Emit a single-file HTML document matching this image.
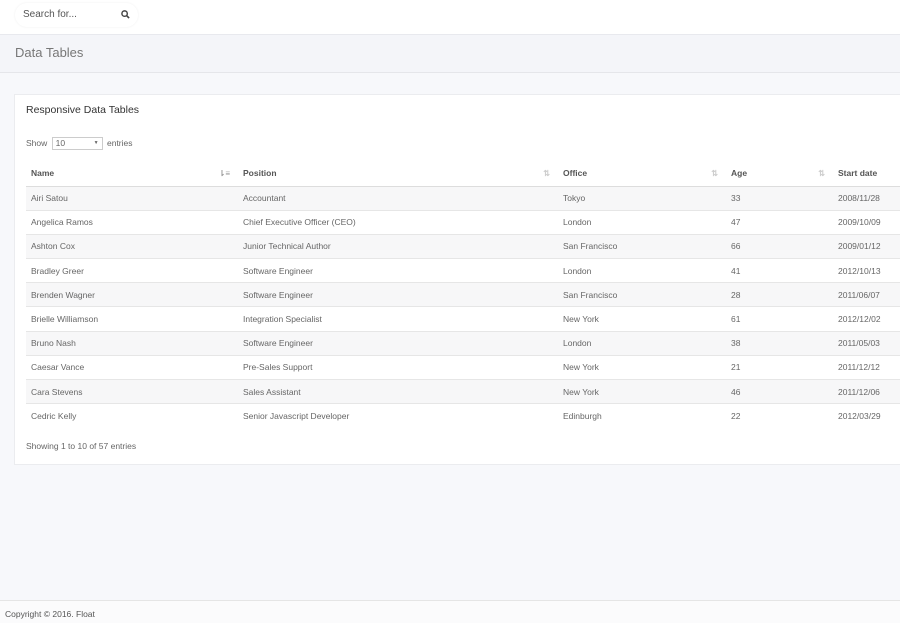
<!DOCTYPE html><html><head><style>
*{box-sizing:border-box;margin:0;padding:0}
body{width:900px;height:623px;overflow:hidden;background:#f7f8fb;font-family:"Liberation Sans",sans-serif;color:#555;position:relative}
.top{position:absolute;left:0;top:0;width:900px;height:35px;background:#fff;border-bottom:1px solid #e8e9ee}
.search{position:absolute;left:15px;top:3px;width:123px;height:24px;border-radius:12px;background:#fff;box-shadow:0 0 2px #eee;font-size:10px;color:#555;padding:6px 0 0 8px}
.hdr{position:absolute;left:0;top:35px;width:900px;height:38px;background:#f4f5f9;border-bottom:1px solid #e5e6ea;font-size:13px;color:#777;padding:10px 0 0 15px}
.card{position:absolute;left:14px;top:94px;width:900px;height:371px;background:#fff;border:1px solid #ebecef}
.card h3{position:absolute;left:11px;top:9px;font-size:10.5px;font-weight:normal;color:#333}
.show{position:absolute;left:11px;top:42px;font-size:8.5px;color:#666}
.sel{display:inline-block;width:51px;height:13px;border:1px solid #ccc;vertical-align:middle;margin:0 2px;padding-left:3px;line-height:11px;position:relative}
.sel:after{content:"▼";position:absolute;right:3px;font-size:5px}
table{position:absolute;left:11px;top:66px;width:880px;border-collapse:collapse;font-size:8.5px;color:#666}
th{height:25px;text-align:left;font-weight:bold;color:#555;padding-left:5px;border-bottom:1px solid #ddd;position:relative}
th i{position:absolute;right:8px;top:8px;font-style:normal;color:#ccc;font-size:8px}
td{height:24.2px;padding-left:5px;border-bottom:1px solid #e6e6e6}
tr.o td{background:#f7f7f8}
.info{position:absolute;left:11px;top:346px;font-size:8.5px;color:#666}
.foot{position:absolute;left:0;top:600px;width:900px;height:23px;border-top:1px solid #e5e5e5;background:#fbfbfc;font-size:8.5px;color:#555;padding:8px 0 0 5px}
</style></head><body>
<div class="top"><div class="search">Search for...<svg style="position:absolute;left:106px;top:7px" width="9" height="9" viewBox="0 0 10 10"><circle cx="4" cy="4" r="3" fill="none" stroke="#444" stroke-width="1.6"/><path d="M6.2 6.2L9 9" stroke="#444" stroke-width="1.8"/></svg></div></div>
<div class="hdr">Data Tables</div>
<div class="card"><h3>Responsive Data Tables</h3>
<div class="show">Show <span class="sel">10</span> entries</div>
<table>
<tr><th style="width:212px">Name<i style="color:#999">⇂≡</i></th><th style="width:320px">Position<i>⇅</i></th><th style="width:168px">Office<i>⇅</i></th><th style="width:107px">Age<i>⇅</i></th><th>Start date</th></tr>
<tr class="o"><td>Airi Satou</td><td>Accountant</td><td>Tokyo</td><td>33</td><td>2008/11/28</td></tr>
<tr><td>Angelica Ramos</td><td>Chief Executive Officer (CEO)</td><td>London</td><td>47</td><td>2009/10/09</td></tr>
<tr class="o"><td>Ashton Cox</td><td>Junior Technical Author</td><td>San Francisco</td><td>66</td><td>2009/01/12</td></tr>
<tr><td>Bradley Greer</td><td>Software Engineer</td><td>London</td><td>41</td><td>2012/10/13</td></tr>
<tr class="o"><td>Brenden Wagner</td><td>Software Engineer</td><td>San Francisco</td><td>28</td><td>2011/06/07</td></tr>
<tr><td>Brielle Williamson</td><td>Integration Specialist</td><td>New York</td><td>61</td><td>2012/12/02</td></tr>
<tr class="o"><td>Bruno Nash</td><td>Software Engineer</td><td>London</td><td>38</td><td>2011/05/03</td></tr>
<tr><td>Caesar Vance</td><td>Pre-Sales Support</td><td>New York</td><td>21</td><td>2011/12/12</td></tr>
<tr class="o"><td>Cara Stevens</td><td>Sales Assistant</td><td>New York</td><td>46</td><td>2011/12/06</td></tr>
<tr><td style="border-bottom:none">Cedric Kelly</td><td style="border-bottom:none">Senior Javascript Developer</td><td style="border-bottom:none">Edinburgh</td><td style="border-bottom:none">22</td><td style="border-bottom:none">2012/03/29</td></tr>
</table>
<div class="info">Showing 1 to 10 of 57 entries</div></div>
<div class="foot">Copyright © 2016. Float</div>
</body></html>
